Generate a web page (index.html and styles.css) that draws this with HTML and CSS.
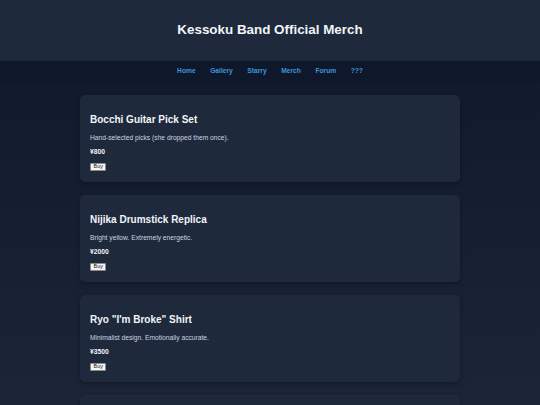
FILE: index.html
```html
<!DOCTYPE html>
<html lang="en">
<head>
    <meta charset="UTF-8">
    <meta name="viewport" content="width=device-width, initial-scale=1.0">
    <title>Kessoku Band Official Merch</title>
    <link rel="stylesheet" href="styles.css">
</head>
<body>
    <header>
        <h1>Kessoku Band Official Merch</h1>
    </header>
    <nav>
        <a href="#">Home</a>
        <a href="#">Gallery</a>
        <a href="#">Starry</a>
        <a href="#">Merch</a>
        <a href="#">Forum</a>
        <a href="#">???</a>
    </nav>
    <main>
        <div class="item">
            <h2>Bocchi Guitar Pick Set</h2>
            <p class="desc">Hand-selected picks (she dropped them once).</p>
            <p class="price">¥800</p>
            <button class="buy">Buy</button>
        </div>
        <div class="item">
            <h2>Nijika Drumstick Replica</h2>
            <p class="desc">Bright yellow. Extremely energetic.</p>
            <p class="price">¥2000</p>
            <button class="buy">Buy</button>
        </div>
        <div class="item">
            <h2>Ryo "I'm Broke" Shirt</h2>
            <p class="desc">Minimalist design. Emotionally accurate.</p>
            <p class="price">¥3500</p>
            <button class="buy">Buy</button>
        </div>
        <div class="item">
            <h2>Kita Aura Sticker Pack</h2>
            <p class="desc">Warning: may cause sudden sparkles.</p>
            <p class="price">¥500</p>
            <button class="buy">Buy</button>
        </div>
    </main>
</body>
</html>
```

FILE: styles.css
```css
body {
    font-family: "Liberation Sans", Arial, sans-serif;
    margin: 0;
    padding: 0;
    background: linear-gradient(180deg, #0f172a 0%, #1c2537 100%);
    background-attachment: fixed;
    color: #e2e8f0;
    min-height: 100vh;
}

header {
    background-color: #1e293b;
    text-align: center;
}

header h1 {
    margin: 0;
    padding: 22px 0 23px;
    font-size: 13.4px;
    line-height: 16px;
    color: #f1f5f9;
}

nav {
    background-color: #0f172a;
    display: flex;
    justify-content: center;
    gap: 14.5px;
    padding: 6px 0;
}

nav a {
    color: #3a98d6;
    text-decoration: none;
    font-size: 6.7px;
    line-height: 8px;
    font-weight: bold;
}

main {
    max-width: 380px;
    margin: 0 auto;
    padding: 14px 0 20px;
    display: flex;
    flex-direction: column;
    gap: 13px;
}

.item {
    background-color: #1e293b;
    border-radius: 5px;
    padding: 10px 10px 10.5px;
    box-shadow: 0 2px 5px rgba(0, 0, 0, 0.3);
}

.item h2 {
    font-size: 10px;
    line-height: 11.5px;
    margin: 9px 0 8.5px;
    color: #f1f5f9;
}

.item .desc {
    font-size: 6.7px;
    line-height: 7.7px;
    margin: 0 0 6px;
    color: #cbd5e1;
}

.item .price {
    font-size: 6.7px;
    line-height: 7.7px;
    font-weight: bold;
    margin: 0 0 7.5px;
    color: #f1f5f9;
}

.item .buy {
    display: block;
    font-family: "Liberation Sans", Arial, sans-serif;
    font-size: 5.5px;
    line-height: 5.5px;
    padding: 0.5px 2.5px;
    margin: 0;
    background-color: #f4f4f4;
    color: #111111;
    border: 1px solid #8a8a8a;
    border-radius: 1px;
    cursor: pointer;
}
```
